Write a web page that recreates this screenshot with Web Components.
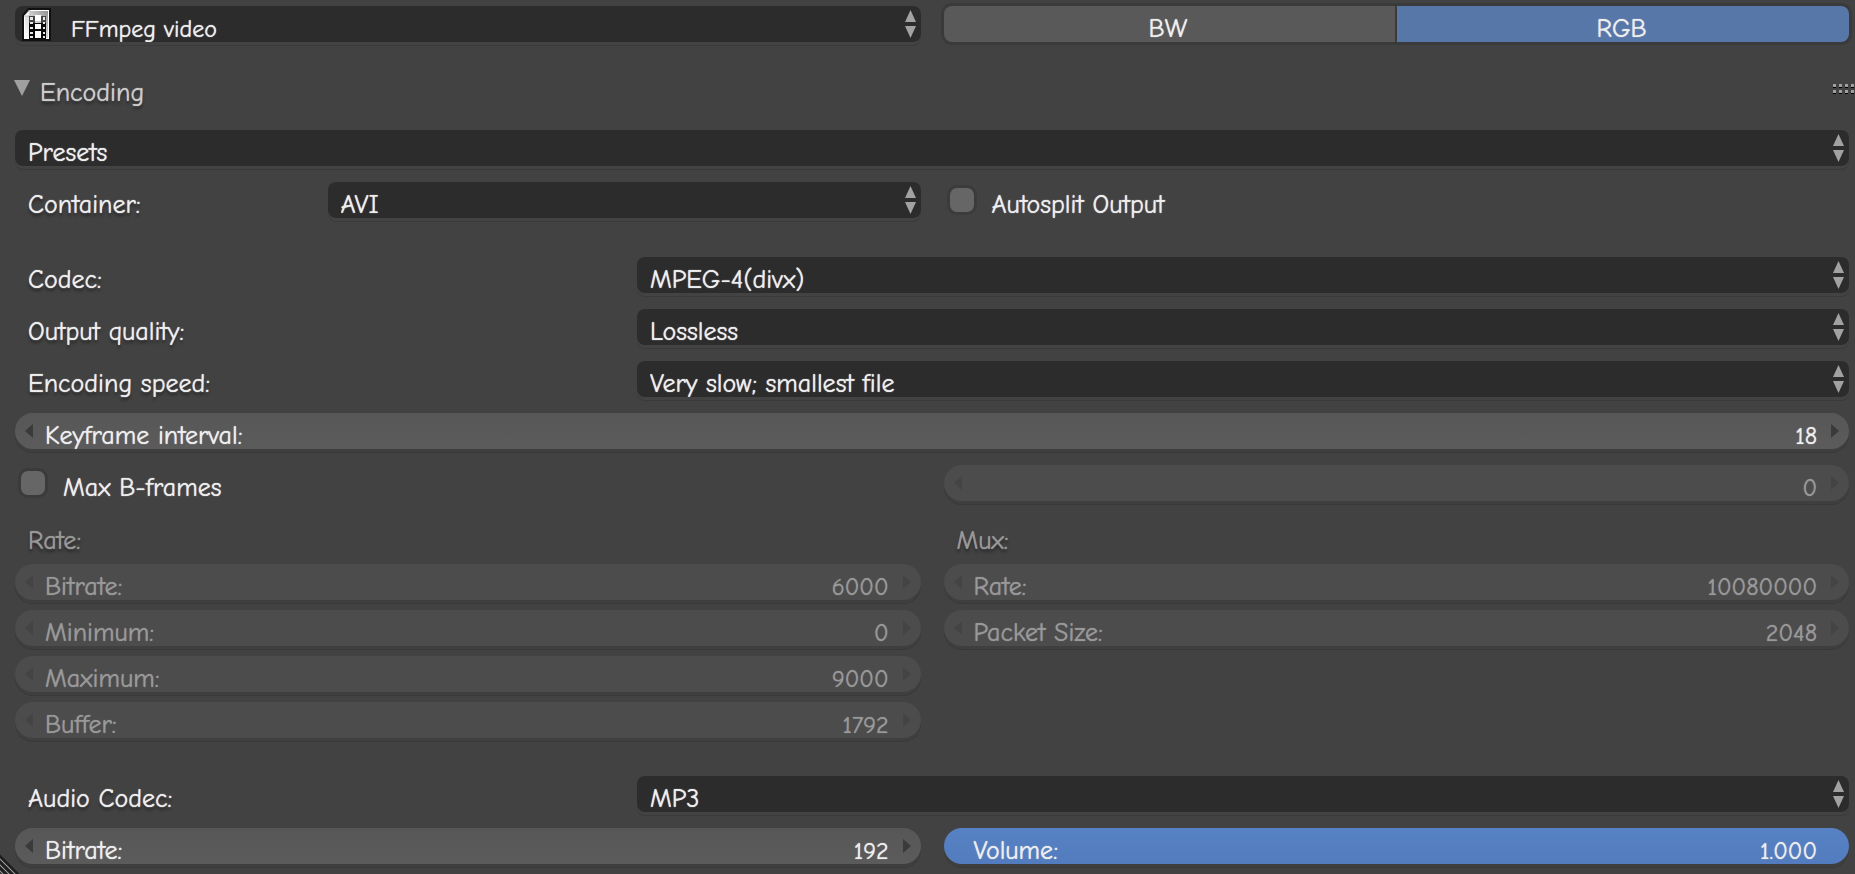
<!DOCTYPE html>
<html lang="en">
<head>
<meta charset="utf-8">
<title>Encoding settings</title>
<style>
  html { background: #424242; }
  body { margin: 0; font-family: "Comic Neue", Lato, sans-serif; font-size: 26px; color: #eeeeee; text-shadow: 0 0 1px currentColor; }
</style>
</head>
<body>
<render-settings></render-settings>

<script>
const base = `
  *, *::before, *::after { box-sizing: border-box; }
  :host { display: block; min-width: 0; }
  button, input, select { font: inherit; color: inherit; text-shadow: inherit; margin: 0; border: 0; background: none; border-radius: 0; appearance: none; outline-offset: 1px; }
  .label { display: block; height: 36px; padding: 11px 0 0 13px; line-height: 25px; white-space: nowrap; text-shadow: 0 0 1px currentColor, 0 3px 3px rgba(0, 0, 0, .45); }
`;

class BaseElement extends HTMLElement {
  constructor() {
    super();
    this.attachShadow({ mode: 'open' });
  }
  attr(name) { return this.getAttribute(name) || ''; }
  connectedCallback() {
    this.shadowRoot.innerHTML = `<style>${base}${this.styles()}</style>${this.markup()}`;
  }
}

/* Plain caption, such as a column heading */
customElements.define('ui-caption', class extends BaseElement {
  styles() { return `:host([disabled]) { color: #999999; }`; }
  markup() { return `<span class="label"><slot></slot></span>`; }
});

/* Drop-down, with an optional caption to its left */
customElements.define('ui-select', class extends BaseElement {
  styles() {
    return `
      :host([label]) { display: grid; grid-template-columns: 1fr 2fr; column-gap: 16px; }
      .box { position: relative; height: 36px; border-radius: 8px; background: #2c2c2c; box-shadow: 0 3px 0 #434343, 0 4px 0 #3a3a3a; }
      select { display: block; width: 100%; height: 36px; padding: 10px 32px 0 13px; line-height: 26px; border-radius: 8px; }
      option { background: #2c2c2c; }
      .arrows { position: absolute; right: 5px; top: 4px; pointer-events: none; }
      ::slotted(svg) { position: absolute; left: 6px; top: 2px; pointer-events: none; }
      :host([icon]) select { padding-left: 56px; font-size: 24px; }`;
  }
  markup() {
    const label = this.attr('label');
    return `
      ${label ? `<label class="label" for="field">${label}</label>` : ''}
      <div class="box">
        <select id="field" ${label ? '' : `aria-label="${this.attr('name')}"`}><option>${this.attr('value')}</option></select>
        <slot></slot>
        <svg class="arrows" width="11" height="28" viewBox="0 0 11 28" aria-hidden="true"><path fill="#a2a2a2" d="M5.500 0 11 12H0zM0 16H11L5.500 28z"/></svg>
      </div>`;
  }
});

/* Number field with step arrows, or a filled slider */
customElements.define('ui-number', class extends BaseElement {
  styles() {
    return `
      :host { display: flex; align-items: center; height: 36px; border-radius: 18px; padding: 0 9px; --arrow: #3a3a3a;
              background: linear-gradient(#575757, #5b5b5b); box-shadow: 0 3px 0 #3f3f3f, 0 4px 0 #393939; }
      :host([disabled]) { background: #4c4c4c; color: #999999; --arrow: #444444; }
      :host([slider]) { background: linear-gradient(#5681c4, #527cbd); --arrow: transparent; }
      .text { padding: 11px 0 0 11px; height: 36px; line-height: 25px; white-space: nowrap; }
      input { flex: 1; min-width: 0; height: 36px; padding: 9px 13px 0 0; text-align: right; font-size: 24px; }
      button { flex: none; display: block; width: 10px; height: 16px; padding: 0; }
      svg { display: block; }
      path { fill: var(--arrow); }`;
  }
  markup() {
    const off = this.hasAttribute('disabled') ? 'disabled' : '';
    const label = this.attr('label');
    return `
      <button type="button" aria-label="Decrease" ${off}><svg width="10" height="16" viewBox="0 0 10 16"><path d="M9 1v14L1 8z"/></svg></button>
      ${label ? `<label class="text" for="field">${label}</label>` : ''}
      <input id="field" type="text" inputmode="decimal" value="${this.attr('value')}" ${label ? '' : `aria-label="${this.attr('name')}"`} ${off}>
      <button type="button" aria-label="Increase" ${off}><svg width="10" height="16" viewBox="0 0 10 16"><path d="M1 1v14L9 8z"/></svg></button>`;
  }
});

customElements.define('ui-check', class extends BaseElement {
  styles() {
    return `
      :host { display: flex; align-items: center; height: 36px; padding-left: 6px; }
      input { width: 24px; height: 24px; border-radius: 7px; background: #666666; box-shadow: 0 0 0 3px #3b3b3b; }
      input:checked { background: #5680c2; }
      label { height: 36px; padding: 11px 0 0 18px; line-height: 25px; white-space: nowrap; }`;
  }
  markup() { return `<input id="field" type="checkbox"><label for="field"><slot></slot></label>`; }
});

/* Row of joined toggle buttons */
customElements.define('ui-toggle', class extends BaseElement {
  styles() {
    return `
      :host { display: grid; grid-template-columns: 1fr 1fr; column-gap: 2px; height: 36px; border-radius: 8px; background: #3a3a3a; box-shadow: 0 0 0 3px #3a3a3a; }
      button { height: 36px; padding: 11px 3px 0 0; line-height: 25px; background: #595959; }
      button:first-of-type { border-radius: 8px 0 0 8px; }
      button:last-of-type { border-radius: 0 8px 8px 0; }
      button[aria-pressed="true"] { background: #5777a8; }`;
  }
  markup() {
    return this.attr('options').split(',').map(o =>
      `<button type="button" aria-pressed="${o === this.attr('value')}">${o}</button>`).join('');
  }
});

customElements.define('ui-columns', class extends BaseElement {
  styles() { return `:host { display: grid; grid-template-columns: 1fr 1fr; column-gap: 23px; align-items: start; }`; }
  markup() { return `<slot></slot>`; }
});

customElements.define('ui-stack', class extends BaseElement {
  styles() { return `:host { display: flex; flex-direction: column; gap: 16px; } :host([tight]) { gap: 10px; }`; }
  markup() { return `<slot></slot>`; }
});

/* Collapsible panel title with its drag grip */
customElements.define('ui-heading', class extends BaseElement {
  styles() {
    return `
      :host { display: flex; align-items: center; justify-content: space-between; height: 88px; padding-top: 6px; margin: 0 -6px 0 -1px; }
      button { display: flex; align-items: center; gap: 10px; padding: 0; font-size: 26px; line-height: 32px; color: #cccccc; text-shadow: 0 0 1px currentColor, 0 3px 3px rgba(0, 0, 0, .45); }
      h2 { font: inherit; margin: 0; padding-top: 8px; }
      button svg { margin-bottom: 2px; }
      svg { display: block; }`;
  }
  markup() {
    const dots = [0, 6, 12, 18].flatMap(x => [0, 6].map(y =>
      `<path fill="#a0a0a0" d="M${x} ${y}h3v3h-3z"/><path fill="#000000" d="M${x} ${y + 3}h3v1h-3z"/>`)).join('');
    return `
      <button type="button" aria-expanded="true"><svg width="16" height="16" viewBox="0 0 16 16" aria-hidden="true"><path fill="#a0a0a0" d="M0 0H16L8 16z"/></svg><h2><slot></slot></h2></button>
      <svg width="22" height="10" viewBox="0 0 22 10" aria-hidden="true">${dots}</svg>`;
  }
});

customElements.define('render-settings', class extends BaseElement {
  styles() {
    return `
      :host { position: relative; padding: 6px 6px 10px 15px; overflow: hidden; }
      .video { margin-top: 39px; }
      .rates { margin-top: 17px; }
      .audio { margin-top: 38px; }
      .corner { position: absolute; left: 0; bottom: 0; }`;
  }
  markup() {
    return `
      <ui-columns>
        <ui-select icon name="File format" value="FFmpeg video">
          <svg width="30" height="33" viewBox="0 0 30 33" aria-hidden="true">
            <defs><linearGradient id="page" x1="1" y1="0" x2="0" y2="1"><stop offset="0" stop-color="#909090"/><stop offset=".55" stop-color="#dddddd"/><stop offset="1" stop-color="#ffffff"/></linearGradient></defs>
            <path fill="#111111" d="M7 0H30V33H1V7z"/>
            <path fill="#ffffff" d="M8 2H28V31H3V8z"/>
            <path fill="url(#page)" d="M9 3H27V30H4V9z"/>
            <path fill="#ffffff" stroke="#bbbbbb" d="M9 2V8H3z"/>
            <path fill="#080808" d="M8 15H25V31H8z"/>
            <path fill="#444444" d="M8 8H14V15H8zM20 8H25V15H20z"/>
            <path fill="#ffffff" d="M14 7H20V13H14zM14 16H20V21H14zM14 23H20V30H14z"/>
            <path fill="#e8e8e8" d="M9 9h3v3h-3zM9 14h3v2h-3zM9 19h3v2h-3zM9 24h3v2h-3zM9 28h3v2h-3zM22 9h2v3h-2zM22 14h2v2h-2zM22 19h2v2h-2zM22 24h2v2h-2zM22 28h2v2h-2z"/>
          </svg>
        </ui-select>
        <ui-toggle options="BW,RGB" value="RGB"></ui-toggle>
      </ui-columns>

      <ui-heading>Encoding</ui-heading>

      <ui-stack>
        <ui-select name="Presets" value="Presets"></ui-select>
        <ui-columns>
          <ui-select label="Container:" value="AVI"></ui-select>
          <ui-check>Autosplit Output</ui-check>
        </ui-columns>
      </ui-stack>

      <ui-stack class="video">
        <ui-select label="Codec:" value="MPEG-4(divx)"></ui-select>
        <ui-select label="Output quality:" value="Lossless"></ui-select>
        <ui-select label="Encoding speed:" value="Very slow; smallest file"></ui-select>
        <ui-number label="Keyframe interval:" value="18"></ui-number>
        <ui-columns>
          <ui-check>Max B-frames</ui-check>
          <ui-number name="Max B-frames" value="0" disabled></ui-number>
        </ui-columns>
      </ui-stack>

      <ui-columns class="rates">
        <ui-stack tight>
          <ui-caption disabled>Rate:</ui-caption>
          <ui-number label="Bitrate:" value="6000" disabled></ui-number>
          <ui-number label="Minimum:" value="0" disabled></ui-number>
          <ui-number label="Maximum:" value="9000" disabled></ui-number>
          <ui-number label="Buffer:" value="1792" disabled></ui-number>
        </ui-stack>
        <ui-stack tight>
          <ui-caption disabled>Mux:</ui-caption>
          <ui-number label="Rate:" value="10080000" disabled></ui-number>
          <ui-number label="Packet Size:" value="2048" disabled></ui-number>
        </ui-stack>
      </ui-columns>

      <ui-stack class="audio">
        <ui-select label="Audio Codec:" value="MP3"></ui-select>
        <ui-columns>
          <ui-number label="Bitrate:" value="192"></ui-number>
          <ui-number label="Volume:" value="1.000" slider></ui-number>
        </ui-columns>
      </ui-stack>

      <svg class="corner" width="20" height="20" viewBox="0 0 20 20" aria-hidden="true">
        <path stroke="#1c1c1c" stroke-width="2" d="M-1 1 19 21M-1 7 13 21M-1 13 7 21"/>
        <path stroke="#999999" d="M-1 4 16 21M-1 10 10 21M-1 16 4 21"/>
      </svg>`;
  }
});
</script>
</body>
</html>
